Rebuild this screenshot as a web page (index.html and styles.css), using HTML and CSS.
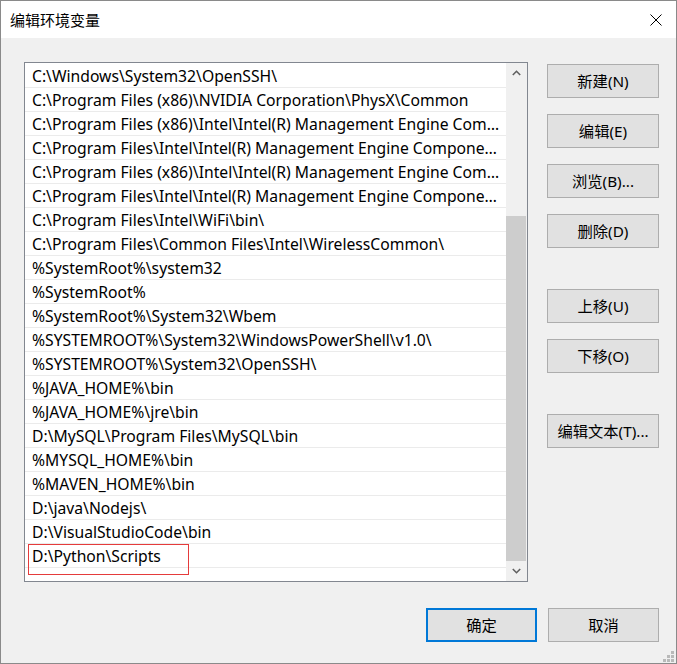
FILE: index.html
```html
<!DOCTYPE html>
<html lang="zh-CN">
<head>
<meta charset="utf-8">
<title>编辑环境变量</title>
<link rel="stylesheet" href="styles.css">
</head>
<body>
<div class="window">
  <div class="titlebar">
    <span class="title">编辑环境变量</span>
    <span class="close">
      <svg width="12" height="12" viewBox="0 0 12 12"><path d="M0.5 0.5 L11.5 11.5 M11.5 0.5 L0.5 11.5" stroke="#000" stroke-width="1" fill="none"/></svg>
    </span>
  </div>
  <div class="content">
    <div class="main">
      <div class="listbox">
        <div class="rows">
          <div class="row">C:\Windows\System32\OpenSSH\</div>
          <div class="row">C:\Program Files (x86)\NVIDIA Corporation\PhysX\Common</div>
          <div class="row">C:\Program Files (x86)\Intel\Intel(R) Management Engine Components\DAL</div>
          <div class="row">C:\Program Files\Intel\Intel(R) Management Engine Components\DAL</div>
          <div class="row">C:\Program Files (x86)\Intel\Intel(R) Management Engine Components\IPT</div>
          <div class="row">C:\Program Files\Intel\Intel(R) Management Engine Components\IPT</div>
          <div class="row">C:\Program Files\Intel\WiFi\bin\</div>
          <div class="row">C:\Program Files\Common Files\Intel\WirelessCommon\</div>
          <div class="row">%SystemRoot%\system32</div>
          <div class="row">%SystemRoot%</div>
          <div class="row">%SystemRoot%\System32\Wbem</div>
          <div class="row">%SYSTEMROOT%\System32\WindowsPowerShell\v1.0\</div>
          <div class="row">%SYSTEMROOT%\System32\OpenSSH\</div>
          <div class="row">%JAVA_HOME%\bin</div>
          <div class="row">%JAVA_HOME%\jre\bin</div>
          <div class="row">D:\MySQL\Program Files\MySQL\bin</div>
          <div class="row">%MYSQL_HOME%\bin</div>
          <div class="row">%MAVEN_HOME%\bin</div>
          <div class="row">D:\java\Nodejs\</div>
          <div class="row">D:\VisualStudioCode\bin</div>
          <div class="row">D:\Python\Scripts</div>
        </div>
        <div class="scrollbar">
          <div class="arrow">
            <svg width="9" height="6" viewBox="0 0 9 6"><path d="M0.8 5 L4.5 1.3 L8.2 5" stroke="#606060" stroke-width="1.6" fill="none"/></svg>
          </div>
          <div class="track">
            <div class="thumb"></div>
          </div>
          <div class="arrow">
            <svg width="9" height="6" viewBox="0 0 9 6"><path d="M0.8 1 L4.5 4.7 L8.2 1" stroke="#606060" stroke-width="1.6" fill="none"/></svg>
          </div>
        </div>
        <div class="highlight"></div>
      </div>
      <div class="side">
        <div class="btn">新建(N)</div>
        <div class="btn">编辑(E)</div>
        <div class="btn">浏览(B)...</div>
        <div class="btn">删除(D)</div>
        <div class="btn group">上移(U)</div>
        <div class="btn">下移(O)</div>
        <div class="btn group">编辑文本(T)...</div>
      </div>
    </div>
    <div class="footer">
      <div class="btn default">确定</div>
      <div class="btn">取消</div>
    </div>
    <div class="grip">
      <span class="dot d1"></span>
      <span class="dot d2"></span>
      <span class="dot d3"></span>
      <span class="dot d4"></span>
      <span class="dot d5"></span>
      <span class="dot d6"></span>
    </div>
  </div>
</div>
</body>
</html>
```

FILE: styles.css
```css
* { box-sizing: border-box; }
html, body { margin: 0; padding: 0; }
body {
  width: 677px;
  height: 664px;
  overflow: hidden;
  background: #f0f0f0;
  font-family: "Noto Sans", "Noto Sans CJK SC", sans-serif;
  font-size: 15px;
  color: #000;
}
.window {
  width: 677px;
  height: 664px;
  border: 1px solid #8a8a8a;
  display: flex;
  flex-direction: column;
  background: #f0f0f0;
}
.titlebar {
  height: 37px;
  flex: none;
  background: #fff;
  display: flex;
  align-items: center;
  justify-content: space-between;
  padding: 0 14px 0 9px;
}
.title {
  font-family: "Noto Sans CJK SC", sans-serif;
  font-size: 15px;
  line-height: 20px;
  padding-top: 1px;
}
.close { display: flex; width: 12px; height: 12px; margin-top: 1px; }
.content {
  flex: 1;
  position: relative;
  padding: 24px 17px 0 23px;
  display: flex;
  flex-direction: column;
}
.main { display: flex; }
.listbox {
  position: relative;
  width: 504px;
  height: 520px;
  border: 1px solid #828790;
  background: #fff;
  display: flex;
}
.rows {
  flex: 1;
  min-width: 0;
  padding-top: 1px;
}
.row {
  height: 24px;
  line-height: 21px;
  padding-top: 2px;
  border-bottom: 1px solid #ebebeb;
  padding-left: 7px;
  padding-right: 3px;
  font-size: 15.7px;
  white-space: nowrap;
  overflow: hidden;
  text-overflow: ellipsis;
}
.scrollbar {
  width: 21px;
  flex: none;
  display: flex;
  flex-direction: column;
  background: #f0f0f0;
  padding-right: 1px;
}
.arrow {
  height: 20px;
  flex: none;
  display: flex;
  align-items: center;
  justify-content: center;
}
.track {
  flex: 1;
  display: flex;
  flex-direction: column;
  justify-content: flex-end;
}
.thumb {
  height: 345px;
  background: #cdcdcd;
}
.highlight {
  position: absolute;
  left: 3px;
  top: 481px;
  width: 161px;
  height: 31px;
  border: 1px solid #e53b3b;
}
.side {
  margin-left: 19px;
  margin-top: 2px;
  width: 112px;
  display: flex;
  flex-direction: column;
  gap: 16px;
}
.btn {
  width: 112px;
  height: 34px;
  background: #e1e1e1;
  border: 1px solid #adadad;
  display: flex;
  align-items: center;
  justify-content: center;
  font-family: "Noto Sans", "Noto Sans CJK SC", sans-serif;
  font-size: 15.3px;
  line-height: 30px;
  white-space: nowrap;
}
.btn.group { margin-top: 25px; }
.footer {
  margin-top: 26px;
  display: flex;
  justify-content: flex-end;
  gap: 11px;
}
.footer .btn { width: 111px; }
.btn.default { border: 2px solid #0078d7; }
.grip {
  position: absolute;
  right: 2px;
  bottom: 1px;
  width: 11px;
  height: 11px;
}
.dot {
  position: absolute;
  width: 3px;
  height: 3px;
  background: #b9b9b9;
}
.d1 { right: 0; top: 0; }
.d2 { right: 4px; top: 4px; }
.d3 { right: 0; top: 4px; }
.d4 { right: 8px; top: 8px; }
.d5 { right: 4px; top: 8px; }
.d6 { right: 0; top: 8px; }
```
